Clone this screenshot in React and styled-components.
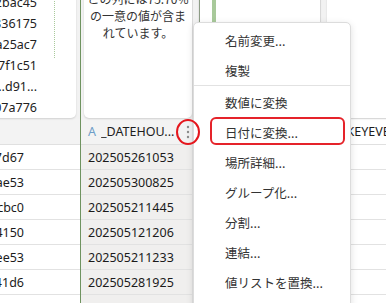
import React from 'react';
import styled, { createGlobalStyle } from 'styled-components';

const GlobalStyle = createGlobalStyle`
  html, body {
    margin: 0;
    padding: 0;
    background: #ffffff;
  }
  body {
    font-family: "Noto Sans", "Noto Sans CJK JP", sans-serif;
    color: #1d1d1d;
  }
`;

const Page = styled.div`
  position: relative;
  width: 386px;
  height: 303px;
  overflow: hidden;
  background: #ffffff;
`;

// the grid is scrolled, so it starts above and left of the window
const Grid = styled.div`
  display: flex;
  align-items: flex-start;
  margin: -20px 0 0 -100px;
`;

const Column = styled.div`
  flex: none;
  display: flex;
  flex-direction: column;
  width: ${(p) => p.width}px;
  border-right: 1px solid ${(p) => p.edge || '#e2e2e2'};
  box-sizing: border-box;
`;

const Summary = styled.div`
  height: 139px;
  box-sizing: border-box;
  display: flex;
  padding: ${(p) => p.pad};
  background: #f2f2f2;
`;

const Card = styled.div`
  position: relative;
  flex: 1;
  background: #ffffff;
  border-radius: 0 0 5px 5px;
  box-shadow: 0 1px 2px rgba(0, 0, 0, 0.14);
  overflow: hidden;
`;

const HashList = styled(Card)`
  display: flex;
  flex-direction: column;
  gap: 3px;
  padding: 14px 39px 0 0;
  font-size: 12.5px;
  line-height: 18px;
  text-align: right;
  color: #222;
  &::after {
    content: '';
    position: absolute;
    top: 0;
    right: 21px;
    height: 78px;
    border-left: 1px dotted #a9c99b;
  }
`;

const Note = styled(Card)`
  padding: 10px 0 0;
  font-family: "Noto Sans CJK JP", sans-serif;
  font-size: 12px;
  line-height: 17px;
  text-align: center;
  color: #333;
`;

const ChartCard = styled(Card)`
  display: flex;
  gap: 6px;
  padding-left: 12px;
  border-left: 1px solid #8d9c86;
  border-radius: 0;
`;

const Bar = styled.div`
  width: 4px;
  height: ${(p) => p.h}px;
  background: #a8c99a;
`;

const HeaderCell = styled.div`
  height: 26px;
  box-sizing: border-box;
  display: flex;
  align-items: center;
  padding: 0 0 0 7px;
  background: ${(p) => p.bg || '#f3f3f3'};
  border-bottom: 1px solid #e0e0e0;
  font-size: 12.5px;
  white-space: nowrap;
`;

const TypeMark = styled.span`
  color: #6d9ec8;
  margin-right: 5px;
`;

const Label = styled.span`
  color: #1d1d1d;
  overflow: hidden;
`;

const Kebab = styled.button`
  position: relative;
  z-index: 20;
  margin-left: auto;
  width: 8px;
  height: 18px;
  padding: 0;
  border: 0;
  background: none;
  display: flex;
  align-items: center;
  justify-content: center;
  &::after {
    content: '';
    position: absolute;
    left: -8px;
    top: -4px;
    width: 20px;
    height: 22px;
    border: 2px solid #e5161d;
    border-radius: 50%;
  }
`;

const Cell = styled.div`
  height: 25px;
  box-sizing: border-box;
  display: flex;
  align-items: center;
  justify-content: ${(p) => (p.right ? 'flex-end' : 'flex-start')};
  padding: ${(p) => (p.right ? '0 56px 0 0' : '0 0 0 7px')};
  background: ${(p) => p.bg || '#ffffff'};
  border-bottom: 1px solid #e2e2e2;
  font-size: 12.5px;
  color: #1b1b1b;
  white-space: nowrap;
  overflow: hidden;
`;

const Menu = styled.ul`
  position: absolute;
  z-index: 10;
  left: 193px;
  top: 22px;
  width: 158px;
  height: 300px;
  box-sizing: border-box;
  margin: 0;
  padding: 2px 0 0;
  list-style: none;
  background: #ffffff;
  border: 1px solid #dcdcdc;
  border-radius: 5px;
  box-shadow: 0 2px 7px rgba(0, 0, 0, 0.13);
  font-family: "Noto Sans CJK JP", sans-serif;
  font-size: 12.5px;
  color: #333;
`;

const Item = styled.li`
  position: relative;
  height: 30px;
  display: flex;
  align-items: center;
  padding-left: 31px;
  &::after {
    content: '';
    display: ${(p) => (p.marked ? 'block' : 'none')};
    position: absolute;
    left: 16px;
    right: 5px;
    top: 0;
    bottom: 2px;
    border: 2px solid #e5232a;
    border-radius: 6px;
  }
`;

const Divider = styled.li`
  height: 1px;
  margin-bottom: 1px;
  background: #e2e2e2;
`;

const hashes = ['e3f1a9c0d2bac45', '90a7c4e1d836175', '5b8e2f6c1a25ac7', '7d2c9b0e4a7f1c51', '3c6a0f5e8…d91...', '84b1e6d3c07a776'];
const leftIds = ['a1c9e04f87d67', '6b2f0d91ae53', '4d70a83fcbc0', '2e9c51b04150', '8f1a6c27ee53', '0c3b7e9a41d6', ''];
const dates = ['202505261053', '202505300825', '202505211445', '202505121206', '202505211233', '202505281925', ''];
const menuItems = ['名前変更...', '複製', '-', '数値に変換', '日付に変換...', '場所詳細...', 'グループ化...', '分割...', '連結...', '値リストを置換...'];

const KebabDots = () => (
  <svg width="4" height="14" viewBox="0 0 4 14">
    <circle cx="2" cy="2" r="1.2" fill="#8a8a8a" />
    <circle cx="2" cy="7" r="1.2" fill="#8a8a8a" />
    <circle cx="2" cy="12" r="1.2" fill="#8a8a8a" />
  </svg>
);

const App = () => (
  <Page>
    <GlobalStyle />
    <Grid>
      <Column width={181} edge="#6f9360">
        <Summary pad="0 4px 1px 0">
          <HashList>
            {hashes.map((h) => (
              <div key={h}>{h}</div>
            ))}
          </HashList>
        </Summary>
        <HeaderCell />
        {leftIds.map((v, i) => (
          <Cell key={i} right>
            {v}
          </Cell>
        ))}
      </Column>

      <Column width={112}>
        <Summary pad="0 0 1px 3px">
          <Note>
            この列には75.70%
            <br />
            の一意の値が含ま
            <br />
            れています。
          </Note>
        </Summary>
        <HeaderCell>
          <TypeMark>A</TypeMark>
          <Label>_DATEHOU...</Label>
          <Kebab aria-label="列メニュー">
            <KebabDots />
          </Kebab>
        </HeaderCell>
        {dates.map((d, i) => (
          <Cell key={i} bg="#f0efee">
            {d}
          </Cell>
        ))}
      </Column>

      <Column width={128}>
        <Summary pad="0 0 1px 6px">
          <ChartCard>
            <Bar h={138} />
          </ChartCard>
        </Summary>
        <HeaderCell bg="#ffffff" />
        {dates.map((d, i) => (
          <Cell key={i} />
        ))}
      </Column>

      <Column width={200}>
        <Summary pad="0 0 1px 6px">
          <Card />
        </Summary>
        <HeaderCell bg="#ffffff">
          <TypeMark>A</TypeMark>
          <Label>_KEYEVENT</Label>
        </HeaderCell>
        {dates.map((d, i) => (
          <Cell key={i} />
        ))}
      </Column>
    </Grid>

    <Menu>
      {menuItems.map((m, i) =>
        m === '-' ? (
          <Divider key={i} />
        ) : (
          <Item key={i} marked={m === '日付に変換...'}>
            {m}
          </Item>
        )
      )}
    </Menu>
  </Page>
);

export default App;
